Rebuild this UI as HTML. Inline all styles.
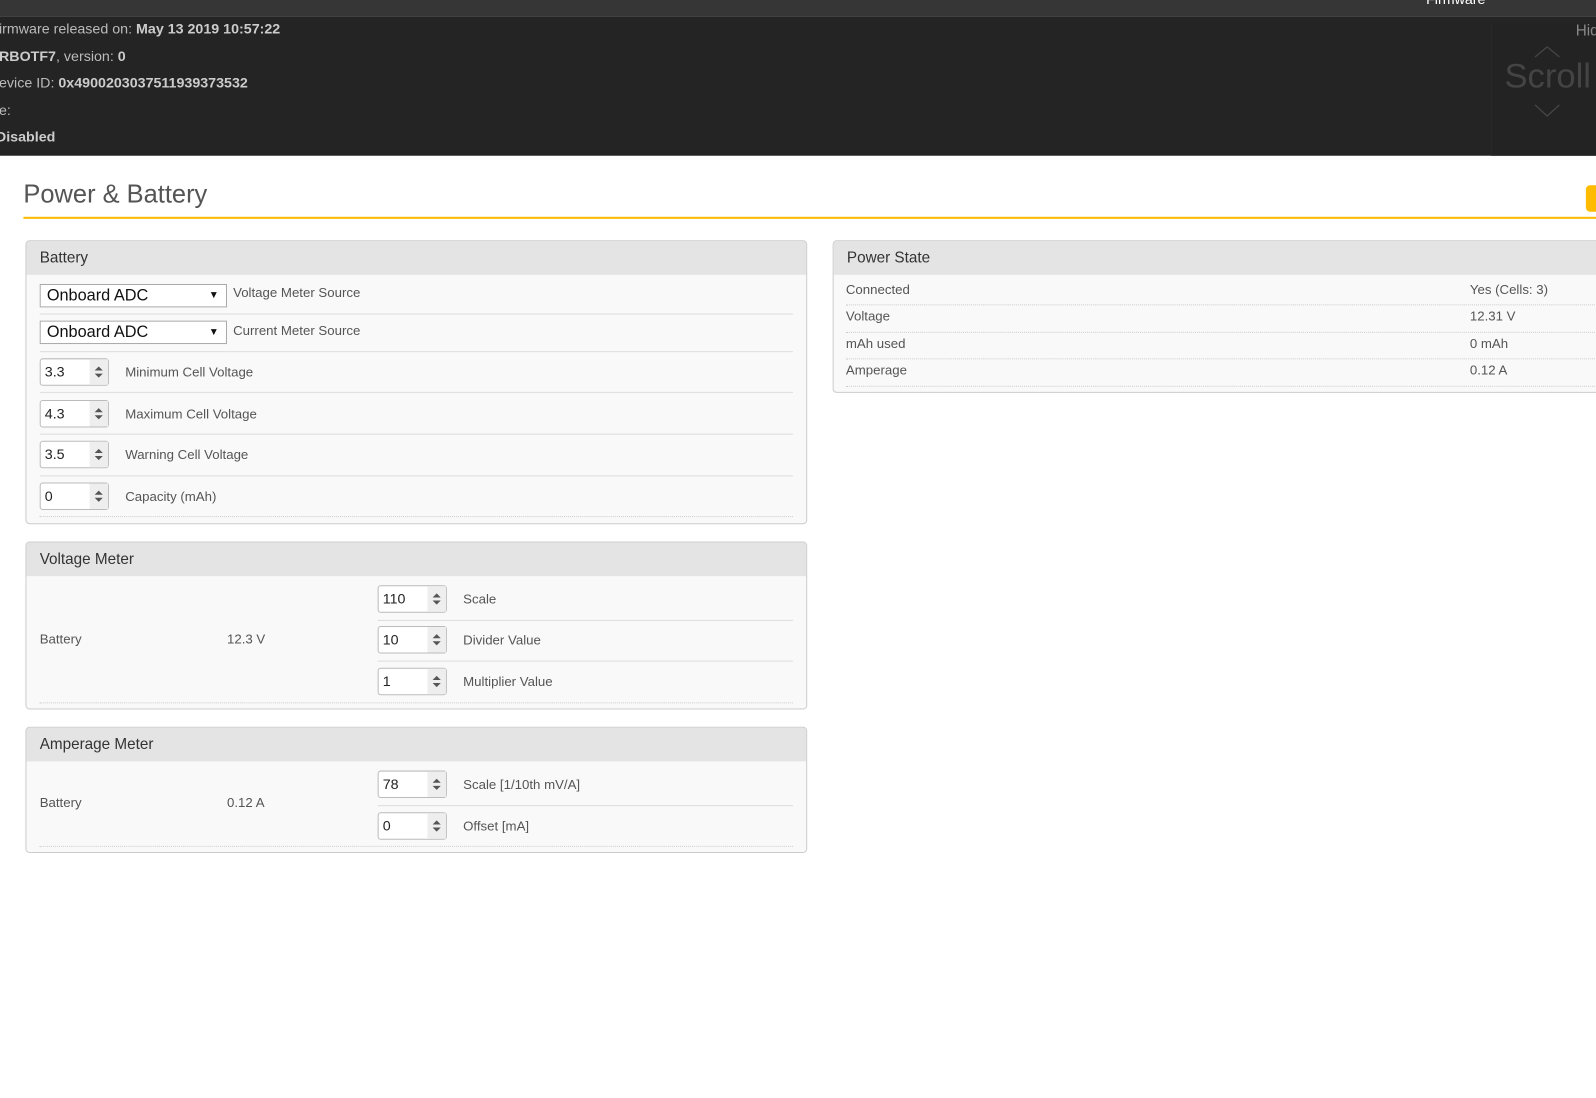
<!DOCTYPE html>
<html><head><meta charset="utf-8">
<style>
*{box-sizing:border-box;margin:0;padding:0}
body{width:1596px;height:1098px;background:#fff;font-family:"Liberation Sans",sans-serif;position:relative;overflow:hidden;color:#444}
#w{position:absolute;left:0;top:0;width:1568px;height:1079px;transform:scale(1.0179);transform-origin:0 0}
.a{position:absolute;white-space:nowrap}
.top{left:0;top:0;width:1568px;height:16px;background:#363636}
.dark{left:0;top:16px;width:1568px;height:137px;background:#242424}
.info{color:#bbb;font-size:14px;left:-1px}
.info b{color:#ccc}
.panel{position:absolute;background:#f9f9f9;border:1px solid #ccc;border-radius:4px;overflow:hidden}
.ph{position:absolute;left:0;top:0;right:0;height:33px;background:#e4e4e4;font-size:15px;color:#333;padding:8px 0 0 13px}
.line{position:absolute;height:0;border-top:1px solid #ddd}
.dot{position:absolute;height:0;border-top:1px dotted #ccc}
.t{position:absolute;font-size:13px;color:#555;white-space:nowrap}
.num{position:absolute;width:68px;height:27px;background:#fff;border:1px solid #bbb;border-radius:3px;font-size:14px;color:#222;padding:4px 0 0 4px}
.num:after{content:"";position:absolute;right:0;top:0;width:18px;height:25px;background:#eee}
.num i{position:absolute;right:5px;z-index:1;width:0;height:0;border-left:4px solid transparent;border-right:4px solid transparent}
.num i.u{top:7px;border-bottom:4px solid #555}
.num i.d{top:14px;border-top:4px solid #555}
.sel{position:absolute;width:184px;height:23px;background:#fff;border:1px solid #aaa;font-size:16px;color:#111;padding:2px 0 0 6px}
.sel:after{content:"▼";position:absolute;right:7px;top:5px;font-size:10px}
</style></head><body><div id="w">
<div class="a top"></div>
<div class="a" style="left:1401px;top:-9px;color:#fff;font-size:14px">Firmware</div>
<div class="a dark"></div>
<div class="a" style="left:1465px;top:24px;width:103px;height:129px;background:#232323;border-left:1px solid #2a2a2a"></div>
<div class="a" style="left:1548px;top:22px;color:#888;font-size:15px">Hid</div>
<div class="a" style="left:1478px;top:56px;color:#444;font-size:34px">Scroll</div>
<svg class="a" style="left:1505px;top:44px" width="30" height="75"><path d="M3 12 L15 2 L27 12" fill="none" stroke="#444" stroke-width="1.3"/><path d="M3 59 L15 70 L27 59" fill="none" stroke="#444" stroke-width="1.3"/></svg>
<div class="a info" style="top:20px">irmware released on: <b>May 13 2019 10:57:22</b></div>
<div class="a info" style="top:47px"><b>RBOTF7</b>, version: <b>0</b></div>
<div class="a info" style="top:73px">evice ID: <b>0x4900203037511939373532</b></div>
<div class="a info" style="top:100px">e:</div>
<div class="a info" style="top:126px;left:-4px"><b>Disabled</b></div>

<div class="a" style="left:23px;top:177px;font-size:25px;color:#555;font-weight:300">Power &amp; Battery</div>
<div class="a" style="left:23px;top:213px;width:1545px;height:2px;background:#ffbb00"></div>
<div class="a" style="left:1558px;top:182px;width:20px;height:26px;background:#ffbb00;border-radius:4px"></div>

<div class="panel" style="left:25px;top:236px;width:768px;height:279px">
<div class="ph">Battery</div>
<div class="sel" style="left:13px;top:42px">Onboard ADC</div><div class="t" style="left:203px;top:43px">Voltage Meter Source</div>
<div class="line" style="left:13px;right:13px;top:71px"></div>
<div class="sel" style="left:13px;top:78px">Onboard ADC</div><div class="t" style="left:203px;top:80px">Current Meter Source</div>
<div class="line" style="left:13px;right:13px;top:108px"></div>
<div class="num" style="left:13px;top:115px">3.3<i class="u"></i><i class="d"></i></div><div class="t" style="left:97px;top:121px">Minimum Cell Voltage</div>
<div class="line" style="left:13px;right:13px;top:148px"></div>
<div class="num" style="left:13px;top:156px">4.3<i class="u"></i><i class="d"></i></div><div class="t" style="left:97px;top:162px">Maximum Cell Voltage</div>
<div class="line" style="left:13px;right:13px;top:189px"></div>
<div class="num" style="left:13px;top:196px">3.5<i class="u"></i><i class="d"></i></div><div class="t" style="left:97px;top:202px">Warning Cell Voltage</div>
<div class="line" style="left:13px;right:13px;top:230px"></div>
<div class="num" style="left:13px;top:237px">0<i class="u"></i><i class="d"></i></div><div class="t" style="left:97px;top:243px">Capacity (mAh)</div>
<div class="dot" style="left:13px;right:13px;top:270px"></div>
</div>

<div class="panel" style="left:25px;top:532px;width:768px;height:165px">
<div class="ph">Voltage Meter</div>
<div class="t" style="left:13px;top:87px">Battery</div>
<div class="t" style="left:197px;top:87px">12.3 V</div>
<div class="num" style="left:345px;top:42px">110<i class="u"></i><i class="d"></i></div><div class="t" style="left:429px;top:48px">Scale</div>
<div class="line" style="left:345px;right:13px;top:76px"></div>
<div class="num" style="left:345px;top:82px">10<i class="u"></i><i class="d"></i></div><div class="t" style="left:429px;top:88px">Divider Value</div>
<div class="line" style="left:345px;right:13px;top:116px"></div>
<div class="num" style="left:345px;top:123px">1<i class="u"></i><i class="d"></i></div><div class="t" style="left:429px;top:129px">Multiplier Value</div>
<div class="dot" style="left:13px;right:13px;top:157px"></div>
</div>

<div class="panel" style="left:25px;top:714px;width:768px;height:124px">
<div class="ph">Amperage Meter</div>
<div class="t" style="left:13px;top:66px">Battery</div>
<div class="t" style="left:197px;top:66px">0.12 A</div>
<div class="num" style="left:345px;top:42px">78<i class="u"></i><i class="d"></i></div><div class="t" style="left:429px;top:48px">Scale [1/10th mV/A]</div>
<div class="line" style="left:345px;right:13px;top:76px"></div>
<div class="num" style="left:345px;top:83px">0<i class="u"></i><i class="d"></i></div><div class="t" style="left:429px;top:89px">Offset [mA]</div>
<div class="dot" style="left:13px;right:13px;top:116px"></div>
</div>

<div class="panel" style="left:818px;top:236px;width:800px;height:150px">
<div class="ph">Power State</div>
<div class="t" style="left:12px;top:40px">Connected</div><div class="t" style="left:625px;top:40px">Yes (Cells: 3)</div>
<div class="dot" style="left:12px;right:0;top:62px"></div>
<div class="t" style="left:12px;top:66px">Voltage</div><div class="t" style="left:625px;top:66px">12.31 V</div>
<div class="dot" style="left:12px;right:0;top:89px"></div>
<div class="t" style="left:12px;top:93px">mAh used</div><div class="t" style="left:625px;top:93px">0 mAh</div>
<div class="dot" style="left:12px;right:0;top:115px"></div>
<div class="t" style="left:12px;top:119px">Amperage</div><div class="t" style="left:625px;top:119px">0.12 A</div>
<div class="dot" style="left:12px;right:0;top:142px"></div>
</div>
</div></body></html>
